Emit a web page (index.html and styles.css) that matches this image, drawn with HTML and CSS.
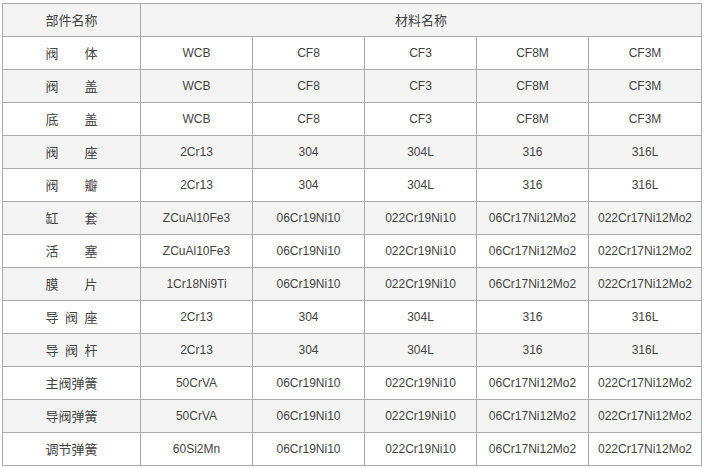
FILE: index.html
```html
<!DOCTYPE html>
<html lang="zh">
<head>
<meta charset="utf-8">
<title>材料表</title>
<link rel="stylesheet" href="styles.css">
</head>
<body>
<table class="mat">
  <colgroup>
    <col class="c-name">
    <col class="c-m">
    <col class="c-m">
    <col class="c-m">
    <col class="c-m">
    <col class="c-last">
  </colgroup>
  <thead>
    <tr><th>部件名称</th><th colspan="5">材料名称</th></tr>
  </thead>
  <tbody>
    <tr><td class="cn">阀　　体</td><td>WCB</td><td>CF8</td><td>CF3</td><td>CF8M</td><td>CF3M</td></tr>
    <tr><td class="cn">阀　　盖</td><td>WCB</td><td>CF8</td><td>CF3</td><td>CF8M</td><td>CF3M</td></tr>
    <tr><td class="cn">底　　盖</td><td>WCB</td><td>CF8</td><td>CF3</td><td>CF8M</td><td>CF3M</td></tr>
    <tr><td class="cn">阀　　座</td><td>2Cr13</td><td>304</td><td>304L</td><td>316</td><td>316L</td></tr>
    <tr><td class="cn">阀　　瓣</td><td>2Cr13</td><td>304</td><td>304L</td><td>316</td><td>316L</td></tr>
    <tr><td class="cn">缸　　套</td><td>ZCuAl10Fe3</td><td>06Cr19Ni10</td><td>022Cr19Ni10</td><td>06Cr17Ni12Mo2</td><td>022Cr17Ni12Mo2</td></tr>
    <tr><td class="cn">活　　塞</td><td>ZCuAl10Fe3</td><td>06Cr19Ni10</td><td>022Cr19Ni10</td><td>06Cr17Ni12Mo2</td><td>022Cr17Ni12Mo2</td></tr>
    <tr><td class="cn">膜　　片</td><td>1Cr18Ni9Ti</td><td>06Cr19Ni10</td><td>022Cr19Ni10</td><td>06Cr17Ni12Mo2</td><td>022Cr17Ni12Mo2</td></tr>
    <tr><td class="cn">导&ensp;阀&ensp;座</td><td>2Cr13</td><td>304</td><td>304L</td><td>316</td><td>316L</td></tr>
    <tr><td class="cn">导&ensp;阀&ensp;杆</td><td>2Cr13</td><td>304</td><td>304L</td><td>316</td><td>316L</td></tr>
    <tr><td class="cn">主阀弹簧</td><td>50CrVA</td><td>06Cr19Ni10</td><td>022Cr19Ni10</td><td>06Cr17Ni12Mo2</td><td>022Cr17Ni12Mo2</td></tr>
    <tr><td class="cn">导阀弹簧</td><td>50CrVA</td><td>06Cr19Ni10</td><td>022Cr19Ni10</td><td>06Cr17Ni12Mo2</td><td>022Cr17Ni12Mo2</td></tr>
    <tr><td class="cn">调节弹簧</td><td>60Si2Mn</td><td>06Cr19Ni10</td><td>022Cr19Ni10</td><td>06Cr17Ni12Mo2</td><td>022Cr17Ni12Mo2</td></tr>
  </tbody>
</table>
</body>
</html>
```

FILE: styles.css
```css
html, body {
  margin: 0;
  padding: 0;
  background: #ffffff;
}
body {
  padding: 3px 0 0 2px;
  font-family: "Liberation Sans", Arial, "Noto Sans CJK SC", sans-serif;
  font-size: 12px;
  line-height: 15px;
  color: #444444;
}
.mat {
  border-collapse: collapse;
  table-layout: fixed;
  width: 700px;
}
.c-name { width: 138px; }
.c-m { width: 112px; }
.c-last { width: 113px; }
.mat th,
.mat td {
  border: 1px solid #aaaaaa;
  height: 32px;
  padding: 0;
  text-align: center;
  vertical-align: middle;
  font-weight: normal;
  white-space: nowrap;
  line-height: 15px;
}
.mat thead tr {
  background: #f4f4f4;
}
.mat th {
  font-size: 13px;
}
.mat tbody tr:nth-child(even) {
  background: #f4f4f4;
}
.mat td.cn {
  font-size: 13px;
}
```
